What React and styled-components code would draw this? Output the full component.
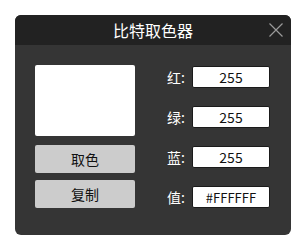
import React from 'react';
import styled, { createGlobalStyle } from 'styled-components';

const GlobalStyle = createGlobalStyle`
    body {
        margin: 0;
        background: #ffffff;
        font-family: "Noto Sans CJK SC", "Noto Sans", sans-serif;
    }
`;

const Window = styled.div`
    width: 276px;
    height: 220px;
    margin: 15px;
    border-radius: 6px;
    overflow: hidden;
    background: #353535;
    display: flex;
    flex-direction: column;
`;

const TitleBar = styled.div`
    height: 30px;
    background: #222222;
    position: relative;
    display: flex;
    align-items: center;
    justify-content: center;
    color: #ffffff;
    font-size: 16px;
`;

const Close = styled.div`
    position: absolute;
    right: 8px;
    top: 8px;
    width: 14px;
    height: 14px;
    display: flex;
`;

const Body = styled.div`
    display: flex;
    padding: 20px 21px 0 20px;
    gap: 32px;
`;

const LeftCol = styled.div`
    width: 100px;
    display: flex;
    flex-direction: column;
`;

const Preview = styled.div`
    height: 71px;
    background: ${p => p.color};
    border-radius: 2px;
    margin-bottom: 9px;
`;

const Button = styled.button`
    height: 28px;
    border: none;
    border-radius: 2px;
    background: #cccccc;
    color: #111111;
    font-family: inherit;
    font-size: 14px;
    padding: 0;
    margin-bottom: ${p => p.$mb || 0}px;
`;

const RightCol = styled.div`
    flex: 1;
    display: flex;
    flex-direction: column;
    gap: 18px;
    padding-top: 1px;
`;

const Row = styled.div`
    display: flex;
    align-items: center;
    height: 22px;
`;

const Label = styled.span`
    width: 25px;
    color: #ffffff;
    font-size: 14px;
`;

const Field = styled.div`
    width: 76px;
    height: 20px;
    background: #ffffff;
    border: 1px solid #1a1a1a;
    border-radius: 2px;
    display: flex;
    align-items: center;
    justify-content: center;
    color: #111111;
    font-size: ${p => p.$small ? 13 : 14}px;
`;

const fields = [
    ['红', '255'],
    ['绿', '255'],
    ['蓝', '255'],
    ['值', '#FFFFFF'],
];

const App = () => {
    return (
        <>
            <GlobalStyle />
            <Window>
                <TitleBar>
                    比特取色器
                    <Close>
                        <svg width="14" height="14" viewBox="0 0 14 14">
                            <path d="M0.5 0.5 L13.5 13.5 M13.5 0.5 L0.5 13.5" stroke="#9a9a9a" strokeWidth="1.2" fill="none" />
                        </svg>
                    </Close>
                </TitleBar>
                <Body>
                    <LeftCol>
                        <Preview color="#ffffff" />
                        <Button $mb={7}>取色</Button>
                        <Button>复制</Button>
                    </LeftCol>
                    <RightCol>
                        {fields.map(([name, value]) => (
                            <Row key={name}>
                                <Label>{name}:</Label>
                                <Field $small={value.startsWith('#')}>{value}</Field>
                            </Row>
                        ))}
                    </RightCol>
                </Body>
            </Window>
        </>
    );
};

export default App;
